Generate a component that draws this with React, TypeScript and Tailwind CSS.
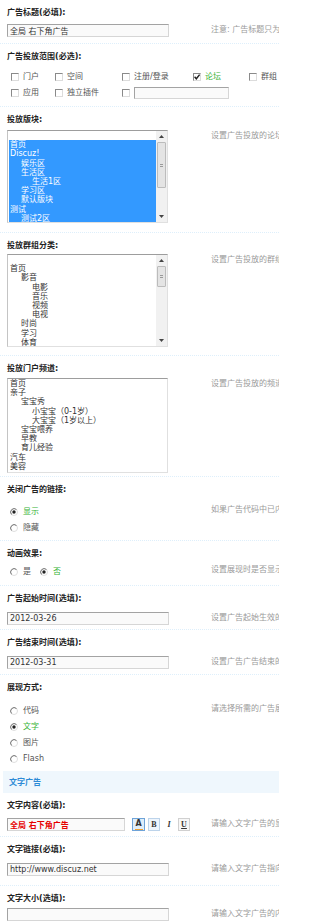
import React from 'react';

type Opt = { t: string; l: number };

// indent per level inside the list boxes
const indent = ['pl-[1px]', 'pl-[12px]', 'pl-[23px]'];

const forumOpts: Opt[] = [
  { t: '首页', l: 0 },
  { t: 'Discuz!', l: 0 },
  { t: '娱乐区', l: 1 },
  { t: '生活区', l: 1 },
  { t: '生活1区', l: 2 },
  { t: '学习区', l: 1 },
  { t: '默认版块', l: 1 },
  { t: '测试', l: 0 },
  { t: '测试2区', l: 1 },
];

const groupOpts: Opt[] = [
  { t: '首页', l: 0 },
  { t: '影音', l: 1 },
  { t: '电影', l: 2 },
  { t: '音乐', l: 2 },
  { t: '视频', l: 2 },
  { t: '电视', l: 2 },
  { t: '时尚', l: 1 },
  { t: '学习', l: 1 },
  { t: '体育', l: 1 },
];

const portalOpts: Opt[] = [
  { t: '首页', l: 0 },
  { t: '亲子', l: 0 },
  { t: '宝宝秀', l: 1 },
  { t: '小宝宝（0-1岁）', l: 2 },
  { t: '大宝宝（1岁以上）', l: 2 },
  { t: '宝宝喂养', l: 1 },
  { t: '早教', l: 1 },
  { t: '育儿经验', l: 1 },
  { t: '汽车', l: 0 },
  { t: '美容', l: 0 },
];

const Label = ({ children, h = 'h-[22px]' }: { children: React.ReactNode; h?: string }) => (
  <div className={`flex items-center pl-[7px] pt-[4px] text-[8px] font-bold text-[#222] ${h}`}>{children}</div>
);

const Row = ({ children, hint, className = '' }: { children: React.ReactNode; hint: string; className?: string }) => (
  <div className={`flex items-start ${className}`}>
    <div className="w-[211px] shrink-0 pl-[7px]">{children}</div>
    <div className="whitespace-nowrap text-[8px] leading-[12px] text-[#9a9a9a]">{hint}</div>
  </div>
);

const TextInput = ({ value = '', w = 'w-[162px]', cls = 'text-[8px] text-[#333]' }: { value?: string; w?: string; cls?: string }) => (
  <input
    readOnly
    value={value}
    className={`block h-[13px] ${w} border border-t-[#a3a3a3] border-l-[#a3a3a3] border-r-[#d6d6d6] border-b-[#d6d6d6] bg-[#fafafa] pl-[2px] leading-[11px] outline-none ${cls}`}
  />
);

const Check = ({ checked }: { checked?: boolean }) => (
  <span className="relative inline-block h-[8px] w-[8px] shrink-0 border border-t-[#8a8a8a] border-l-[#8a8a8a] border-r-[#dcdcdc] border-b-[#dcdcdc] bg-white">
    {checked && (
      <svg viewBox="0 0 8 8" className="absolute -left-[1px] -top-[1px] h-[8px] w-[8px]">
        <path d="M1.6 3.8 L3.3 5.8 L6.6 1.6" stroke="#222" strokeWidth="1.4" fill="none" />
      </svg>
    )}
  </span>
);

const Radio = ({ checked }: { checked?: boolean }) => (
  <svg width="8" height="8" viewBox="0 0 8 8" className="shrink-0">
    <circle cx="4" cy="4" r="3.5" fill="#fff" stroke="#dedede" />
    <path d="M1.53 6.47 A3.5 3.5 0 0 1 6.47 1.53" stroke="#777" fill="none" />
    {checked && <circle cx="4" cy="4" r="1.7" fill="#222" />}
  </svg>
);

const CheckItem = ({ text, checked }: { text: string; checked?: boolean }) => (
  <div className="flex h-[16px] items-center">
    <Check checked={checked} />
    <span className={`ml-[4px] whitespace-nowrap text-[8px] ${checked ? 'text-[#36b336]' : 'text-[#555]'}`}>{text}</span>
  </div>
);

const RadioItem = ({ text, checked, w = '' }: { text: string; checked?: boolean; w?: string }) => (
  <div className={`flex h-[16px] items-center pl-[3px] ${w}`}>
    <Radio checked={checked} />
    <span className={`ml-[5px] whitespace-nowrap text-[8px] ${checked ? 'text-[#36b336]' : 'text-[#555]'}`}>{text}</span>
  </div>
);

const Arrow = ({ up }: { up?: boolean }) => (
  <div className="flex h-[11px] w-full items-center justify-center">
    <svg width="5" height="3" viewBox="0 0 5 3">
      <path d={up ? 'M0 3 L2.5 0 L5 3Z' : 'M0 0 L2.5 3 L5 0Z'} fill="#444" />
    </svg>
  </div>
);

const Scrollbar = ({ thumb }: { thumb: string }) => (
  <div className="flex h-full w-[11px] shrink-0 flex-col items-center bg-[#f1f1f1]">
    <Arrow up />
    <div className={`flex w-[9px] ${thumb} items-center justify-center rounded-[1px] border border-[#bcbcbc] bg-[#e4e4e4]`}>
      <span className="h-[3px] w-[3px] border-y border-[#9a9a9a]" />
    </div>
    <div className="flex-1" />
    <Arrow />
  </div>
);

const ListBox = ({ opts, blank, selected, thumb, h }: { opts: Opt[]; blank?: boolean; selected?: boolean; thumb?: string; h: string }) => (
  <div className={`flex w-[161px] ${h} overflow-hidden border border-t-[#9d9d9d] border-l-[#c4c4c4] border-r-[#e0e0e0] border-b-[#e0e0e0] bg-white`}>
    <div className="min-w-0 flex-1 pl-[1px] text-[8px] leading-[9.2px] text-[#333]">
      {blank && <div className="h-[9.2px]" />}
      <div className={selected ? 'bg-[#3399ff] text-white' : ''}>
        {opts.map((o, i) => (
          <div key={i} className={`h-[9.2px] whitespace-nowrap ${indent[o.l]}`}>{o.t}</div>
        ))}
      </div>
    </div>
    {thumb && <Scrollbar thumb={thumb} />}
  </div>
);

const Block = ({ children, line = true }: { children: React.ReactNode; line?: boolean }) => (
  <div className={line ? 'border-t border-dotted border-[#deeffb]' : ''}>{children}</div>
);

const App: React.FC = () => {
  return (
    <div className="min-h-[924px] w-[279px] overflow-hidden bg-white text-[#333] [font-family:'DejaVu_Sans','Noto_Sans_CJK_SC',sans-serif]">
      {/* 标题 */}
      <Block line={false}>
        <Label>广告标题(必填):</Label>
        <Row hint="注意: 广告标题只为识别辨认不同广告条目之用，并不在广告中显示" className="pt-[2px] pb-[6px]">
          <TextInput value="全局 右下角广告" cls="text-[8px] text-[#333]" />
        </Row>
      </Block>

      {/* 投放范围 */}
      <Block>
        <Label h="h-[21px]">广告投放范围(必选):</Label>
        <div className="grid grid-cols-[44px_67px_71px_56px_1fr] pl-[11px] pt-[4px] pb-[5px]">
          <CheckItem text="门户" />
          <CheckItem text="空间" />
          <CheckItem text="注册/登录" />
          <CheckItem text="论坛" checked />
          <CheckItem text="群组" />
          <CheckItem text="应用" />
          <CheckItem text="独立插件" />
          <div className="col-span-3 flex h-[16px] items-center">
            <Check />
            <input
              readOnly
              className="ml-[4px] block h-[12px] w-[95px] border border-t-[#a3a3a3] border-l-[#a3a3a3] border-r-[#d6d6d6] border-b-[#d6d6d6] bg-[#fafafa] outline-none"
            />
          </div>
        </div>
      </Block>

      {/* 版块 */}
      <Block>
        <Label>投放版块:</Label>
        <Row hint="设置广告投放的论坛版块，可以按住 CTRL 多选，选择“所有”为不限制" className="pt-[1px] pb-[9px]">
          <ListBox opts={forumOpts} blank selected thumb="h-[46px]" h="h-[93px]" />
        </Row>
      </Block>

      {/* 群组 */}
      <Block>
        <Label h="h-[21px]">投放群组分类:</Label>
        <Row hint="设置广告投放的群组分类，可以按住 CTRL 多选，选择“所有”为不限制" className="pb-[8px]">
          <ListBox opts={groupOpts} blank thumb="h-[21px]" h="h-[93px]" />
        </Row>
      </Block>

      {/* 门户频道 */}
      <Block>
        <Label>投放门户频道:</Label>
        <Row hint="设置广告投放的频道，可以按住 CTRL 多选，选择“所有”为不限制" className="pb-[3px]">
          <ListBox opts={portalOpts} h="h-[95px]" />
        </Row>
      </Block>

      {/* 关闭链接 */}
      <Block>
        <Label>关闭广告的链接:</Label>
        <Row hint="如果广告代码中已内置关闭链接，请选择隐藏" className="pt-[5px] pb-[4px]">
          <RadioItem text="显示" checked />
          <RadioItem text="隐藏" />
        </Row>
      </Block>

      {/* 动画 */}
      <Block>
        <Label>动画效果:</Label>
        <Row hint="设置展现时是否显示动画效果" className="pt-[1px] pb-[5px]">
          <div className="flex">
            <RadioItem text="是" w="w-[30px]" />
            <RadioItem text="否" checked />
          </div>
        </Row>
      </Block>

      {/* 起始时间 */}
      <Block>
        <Label>广告起始时间(选填):</Label>
        <Row hint="设置广告起始生效的时间，格式 yyyy-mm-dd，留空为不限制起始时间" className="pt-[4px] pb-[4px]">
          <TextInput value="2012-03-26" />
        </Row>
      </Block>

      {/* 结束时间 */}
      <Block>
        <Label>广告结束时间(选填):</Label>
        <Row hint="设置广告广告结束的时间，格式 yyyy-mm-dd，留空为不限制结束时间" className="pt-[4px] pb-[5px]">
          <TextInput value="2012-03-31" />
        </Row>
      </Block>

      {/* 展现方式 */}
      <Block>
        <Label>展现方式:</Label>
        <Row hint="请选择所需的广告展现方式" className="pt-[6px] pb-[4px]">
          <RadioItem text="代码" />
          <RadioItem text="文字" checked />
          <RadioItem text="图片" />
          <RadioItem text="Flash" />
        </Row>
      </Block>

      {/* 文字广告 */}
      <div className="ml-[3px] flex h-[22px] items-center bg-[#eff7fd] pl-[6px] pt-[2px] text-[8px] font-bold text-[#2d8bd6]">
        文字广告
      </div>

      <Block line={false}>
        <Label>文字内容(必填):</Label>
        <Row hint="请输入文字广告的显示内容" className="pt-[3px] pb-[5px]">
          <div className="flex items-center">
            <TextInput value="全局 右下角广告" w="w-[118px]" cls="text-[8px] font-bold text-[#e60000]" />
            <div className="ml-[7px] flex h-[13px] w-[13px] flex-col items-center justify-center border border-[#6ea3d8] bg-[#deedfb] text-[8px] font-bold leading-[8px] text-[#333]">
              A
              <span className="mt-[1px] h-[1px] w-[8px] bg-[#f0a030]" />
            </div>
            <div className="ml-[3px] flex h-[13px] w-[12px] items-center justify-center border border-[#bcd3ea] bg-[#eef5fd] text-[8px] font-bold text-[#333] [font-family:'Liberation_Serif',serif]">
              B
            </div>
            <div className="ml-[4px] flex h-[13px] w-[10px] items-center justify-center text-[8px] font-bold italic text-[#333] [font-family:'Liberation_Serif',serif]">
              I
            </div>
            <div className="ml-[4px] flex h-[13px] w-[12px] items-center justify-center border border-[#d0d0d0] bg-[#f7f7f7] text-[8px] font-bold text-[#333] underline [font-family:'Liberation_Serif',serif]">
              U
            </div>
          </div>
        </Row>
      </Block>

      <Block>
        <Label>文字链接(必填):</Label>
        <Row hint="请输入文字广告指向的 URL 链接地址" className="pt-[4px] pb-[9px]">
          <TextInput value="http://www.discuz.net" />
        </Row>
      </Block>

      <Block>
        <Label>文字大小(选填):</Label>
        <Row hint="请输入文字广告的内容显示字体，可使用 px、pt、em 作为单位">
          <TextInput />
        </Row>
      </Block>
    </div>
  );
};

export default App;
